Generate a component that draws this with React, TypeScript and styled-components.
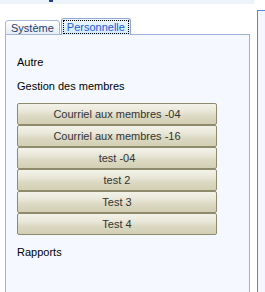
import React from "react";
import styled, { createGlobalStyle } from "styled-components";

const Global = createGlobalStyle`
  html, body { margin: 0; padding: 0; background: #ffffff; height: 100%; overflow: hidden; }
  body { font-family: "Liberation Sans", Arial, sans-serif; font-size: 11px; }
  #root { height: 100%; }
`;

const Page = styled.div`
  display: flex;
  height: 292px;
  width: 265px;
`;

const LeftArea = styled.div`
  width: 254px;
  display: flex;
  flex-direction: column;
`;

const TopBand = styled.div`
  height: 4px;
  background: #eef4fc;
  position: relative;
`;

const Mark = styled.div`
  position: absolute;
  left: 49px;
  top: 0;
  width: 4px;
  height: 2px;
  background: #1f3f8f;
`;

const TabControl = styled.div`
  margin: 15px 0 0 5px;
  width: 245px;
  flex: 1;
  display: flex;
  flex-direction: column;
`;

const TabRow = styled.div`
  display: flex;
  align-items: flex-end;
  height: 16px;
  position: relative;
  z-index: 1;
  margin-bottom: -1px;
`;

const Tab = styled.div<{ $active?: boolean }>`
  box-sizing: border-box;
  height: ${(p) => (p.$active ? "17px" : "15px")};
  margin-left: ${(p) => (p.$active ? "1px" : "0")};
  padding: ${(p) => (p.$active ? "1px" : "0")};
  border: 1px solid ${(p) => (p.$active ? "#8fa6d6" : "#a7b7da")};
  border-bottom: ${(p) => (p.$active ? "none" : "1px solid #a7b7da")};
  border-radius: 3px 3px 0 0;
  background: ${(p) =>
    p.$active
      ? "linear-gradient(#eef7ff, #cfe8ff)"
      : "linear-gradient(#ffffff, #e6ecf6)"};
  color: ${(p) => (p.$active ? "#1f5cd1" : "#1e3d6b")};
  font-size: 11px;
  display: flex;
`;

const TabLabel = styled.div<{ $focus?: boolean }>`
  box-sizing: border-box;
  display: flex;
  align-items: center;
  padding: 0 ${(p) => (p.$focus ? "3px" : "5px")};
  border: ${(p) => (p.$focus ? "1px dotted #000" : "none")};
  line-height: 12px;
  height: 100%;
`;

const Panel = styled.div`
  flex: 1;
  border: 1px solid #9fb0dc;
  border-bottom: none;
  background: #f5f9ff;
  padding: 21px 0 0 11px;
  display: flex;
  flex-direction: column;
`;

const Label = styled.div<{ $gap?: number }>`
  color: #000;
  font-size: 11px;
  line-height: 13px;
  height: 13px;
  margin-bottom: ${(p) => p.$gap ?? 0}px;
`;

const ButtonList = styled.div`
  display: flex;
  flex-direction: column;
  width: 200px;
  margin-bottom: 11px;
`;

const Btn = styled.button`
  box-sizing: border-box;
  height: 22px;
  width: 200px;
  margin: 0;
  border: 1px solid #8d8b6b;
  border-radius: 2px;
  background: linear-gradient(
    #f3f2e8 0%,
    #eae8da 35%,
    #dcd9c3 60%,
    #d3cfb5 100%
  );
  color: #333333;
  font-family: "Liberation Sans", Arial, sans-serif;
  font-size: 11px;
  padding: 0;
  line-height: 20px;
  text-align: center;
`;

const RightArea = styled.div`
  flex: 1;
  padding-top: 10px;
  padding-left: 3px;
  display: flex;
`;

const RightPanel = styled.div`
  flex: 1;
  border-left: 1px solid #4d88ea;
  border-top: 1px solid #4d88ea;
  background: #f3f7fd;
`;

const buttons = [
  "Courriel aux membres -04",
  "Courriel aux membres -16",
  "test -04",
  "test 2",
  "Test 3",
  "Test 4",
];

export default function App() {
  return (
    <>
      <Global />
      <Page>
        <LeftArea>
          <TopBand>
            <Mark />
          </TopBand>
          <TabControl>
            <TabRow>
              <Tab>
                <TabLabel>Système</TabLabel>
              </Tab>
              <Tab $active>
                <TabLabel $focus>Personnelle</TabLabel>
              </Tab>
            </TabRow>
            <Panel>
              <Label $gap={11}>Autre</Label>
              <Label $gap={10}>Gestion des membres</Label>
              <ButtonList>
                {buttons.map((b) => (
                  <Btn key={b}>{b}</Btn>
                ))}
              </ButtonList>
              <Label>Rapports</Label>
            </Panel>
          </TabControl>
        </LeftArea>
        <RightArea>
          <RightPanel />
        </RightArea>
      </Page>
    </>
  );
}
